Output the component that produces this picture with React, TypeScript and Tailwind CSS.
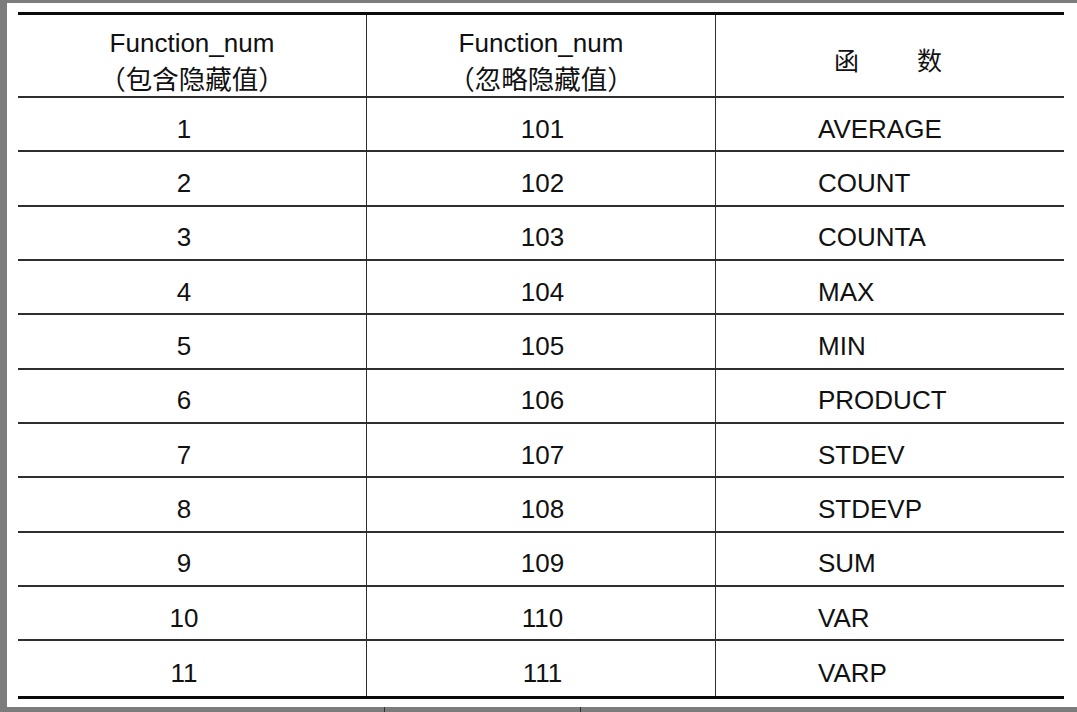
import React from "react";

const rows: [string, string, string][] = [
  ["1", "101", "AVERAGE"],
  ["2", "102", "COUNT"],
  ["3", "103", "COUNTA"],
  ["4", "104", "MAX"],
  ["5", "105", "MIN"],
  ["6", "106", "PRODUCT"],
  ["7", "107", "STDEV"],
  ["8", "108", "STDEVP"],
  ["9", "109", "SUM"],
  ["10", "110", "VAR"],
  ["11", "111", "VARP"],
];

const latin = { fontFamily: '"Liberation Sans", Arial, "Noto Sans CJK SC", sans-serif' };
const cjk = { fontFamily: '"Liberation Sans", "Noto Sans CJK SC", sans-serif' };

export default function App() {
  return (
    <div className="w-[1077px] h-[712px] bg-[#7c7c7c] overflow-hidden relative text-[#111]" style={latin}>
      <div className="pl-[7px] pt-[3px]">
        <div className="bg-white h-[704px] pl-[11px] pt-[9px] relative">
          <div className="w-[1046px] border-t-[3px] border-b-[3px] border-[#0a0a0a]">
            {/* header */}
            <div className="grid grid-cols-[348px_1px_348px_1px_348px] h-[83px] border-b-2 border-[#2e2e2e]">
              <div className="flex flex-col items-center pt-[11px]">
                <div className="text-[26px] leading-[34px]">Function_num</div>
                <div className="text-[26.5px] leading-[40px]" style={cjk}>（包含隐藏值）</div>
              </div>
              <div className="bg-[#2e2e2e]" />
              <div className="flex flex-col items-center pt-[11px]">
                <div className="text-[26px] leading-[34px]">Function_num</div>
                <div className="text-[26.5px] leading-[40px]" style={cjk}>（忽略隐藏值）</div>
              </div>
              <div className="bg-[#2e2e2e]" />
              <div className="flex items-center justify-center pt-[9px] pr-[4px] text-[25px] gap-[58px]" style={cjk}>
                <span>函</span>
                <span>数</span>
              </div>
            </div>
            {rows.map((r, i) => (
              <div
                key={i}
                className={
                  "grid grid-cols-[348px_1px_348px_1px_348px] h-[54.35px] " +
                  (i < rows.length - 1 ? "border-b-2 border-[#2e2e2e]" : "")
                }
              >
                <div className="flex items-center justify-center pt-[9px] pr-[16px] text-[26px] leading-none">{r[0]}</div>
                <div className="bg-[#2e2e2e]" />
                <div className="flex items-center justify-center pt-[9px] pl-[3px] text-[26px] leading-none">{r[1]}</div>
                <div className="bg-[#2e2e2e]" />
                <div className="flex items-center pl-[102px] pt-[9px] text-[26px] leading-none">{r[2]}</div>
              </div>
            ))}
          </div>
        </div>
      </div>
      {/* edge of next table at bottom */}
      <div className="absolute left-0 top-[707px] w-full h-[5px] flex">
        <div className="w-[384px]" />
        <div className="w-px h-full bg-[#333]" />
        <div className="w-[195px]" />
        <div className="w-px h-full bg-[#333]" />
      </div>
    </div>
  );
}
